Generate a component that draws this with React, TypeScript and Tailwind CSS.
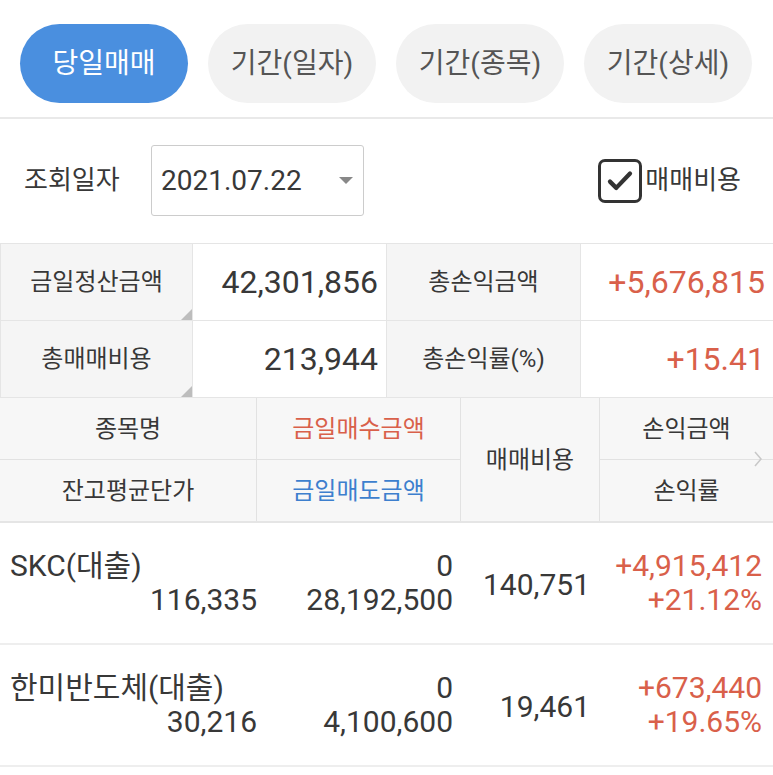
import React from "react";

const font = { fontFamily: "Roboto, 'Noto Sans CJK KR', sans-serif" };

const tabs = ["당일매매", "기간(일자)", "기간(종목)", "기간(상세)"];

const rows = [
  { name: "SKC(대출)", avg: "116,335", buy: "0", sell: "28,192,500", fee: "140,751", pl: "+4,915,412", rate: "+21.12%" },
  { name: "한미반도체(대출)", avg: "30,216", buy: "0", sell: "4,100,600", fee: "19,461", pl: "+673,440", rate: "+19.65%" },
];

const Corner = () => (
  <span className="absolute right-0 bottom-0 w-0 h-0 border-l-[11px] border-l-transparent border-b-[11px] border-b-[#bdbdbd]" />
);

const App: React.FC = () => {
  return (
    <div className="w-[773px] min-h-[775px] bg-white text-[#383838]" style={font}>
      {/* tabs */}
      <div className="flex gap-5 px-5 pt-6 pb-[14px]">
        {tabs.map((t, i) => (
          <div
            key={t}
            className={
              i === 0
                ? "w-[168px] h-[79px] rounded-full flex items-center justify-center text-[28px] bg-[#4a8fdf] text-white"
                : "w-[168px] h-[79px] rounded-full flex items-center justify-center text-[28px] bg-[#f2f2f2] text-[#555]"
            }
          >
            {t}
          </div>
        ))}
      </div>
      <div className="h-[2px] bg-[#e9e9e9]" />

      {/* query row */}
      <div className="flex items-center pt-[26px] pb-[27px] pl-6 pr-8">
        <span className="text-[26px] w-[127px]">조회일자</span>
        <div className="w-[213px] h-[71px] border border-[#cccccc] rounded-[3px] flex items-center justify-between pl-[9px] pr-[10px]">
          <span className="text-[28px]">2021.07.22</span>
          <span className="w-0 h-0 border-l-[7px] border-r-[7px] border-t-[7px] border-l-transparent border-r-transparent border-t-[#888]" />
        </div>
        <div className="ml-auto flex items-center">
          <div className="w-[44px] h-[44px] border-[3px] border-[#333] rounded-[7px] flex items-center justify-center">
            <svg width="30" height="30" viewBox="0 0 24 24" fill="none" stroke="#333" strokeWidth="3.4" strokeLinecap="round" strokeLinejoin="round">
              <path d="M4 12.5l5 5L20 6" />
            </svg>
          </div>
          <span className="text-[26px] ml-[3px]">매매비용</span>
        </div>
      </div>

      {/* summary */}
      <div className="grid grid-cols-[193px_194px_194px_192px] border-t border-[#e5e5e5]">
        <div className="relative h-[77px] bg-[#f5f5f5] border-r border-b border-l border-[#e5e5e5] flex items-center justify-center text-[24px]">
          금일정산금액
          <Corner />
        </div>
        <div className="h-[77px] border-r border-b border-[#e5e5e5] flex items-center justify-end pr-2 text-[32px]">42,301,856</div>
        <div className="h-[77px] bg-[#f5f5f5] border-r border-b border-[#e5e5e5] flex items-center justify-center text-[24px]">총손익금액</div>
        <div className="h-[77px] border-b border-[#e5e5e5] flex items-center justify-end pr-2 text-[32px] text-[#d9604a]">+5,676,815</div>
        <div className="relative h-[77px] bg-[#f5f5f5] border-r border-b border-l border-[#e5e5e5] flex items-center justify-center text-[24px]">
          총매매비용
          <Corner />
        </div>
        <div className="h-[77px] border-r border-b border-[#e5e5e5] flex items-center justify-end pr-2 text-[32px]">213,944</div>
        <div className="h-[77px] bg-[#f5f5f5] border-r border-b border-[#e5e5e5] flex items-center justify-center text-[24px]">총손익률(%)</div>
        <div className="h-[77px] border-b border-[#e5e5e5] flex items-center justify-end pr-2 text-[32px] text-[#d9604a]">+15.41</div>
      </div>

      {/* header */}
      <div className="relative grid grid-cols-[257px_204px_139px_173px] grid-rows-[62px_61px] bg-[#f7f7f7] border-b-2 border-[#e5e5e5] text-[24px]">
        <div className="border-r border-b border-[#e2e2e2] flex items-center justify-center">종목명</div>
        <div className="border-r border-b border-[#e2e2e2] flex items-center justify-center text-[#d9604a]">금일매수금액</div>
        <div className="row-span-2 border-r border-[#e2e2e2] flex items-center justify-center">매매비용</div>
        <div className="border-b border-[#e2e2e2] flex items-center justify-center">손익금액</div>
        <div className="border-r border-[#e2e2e2] flex items-center justify-center">잔고평균단가</div>
        <div className="border-r border-[#e2e2e2] flex items-center justify-center text-[#3d7fce]">금일매도금액</div>
        <div className="flex items-center justify-center">손익률</div>
        <svg className="absolute right-[10px] top-[51px]" width="10" height="20" viewBox="0 0 10 20" fill="none" stroke="#c8c8c8" strokeWidth="1.5">
          <path d="M2 3l6 7-6 7" />
        </svg>
      </div>

      {/* data rows */}
      {rows.map((r) => (
        <div key={r.name} className="grid grid-cols-[257px_204px_139px_173px] h-[122px] border-b-2 border-[#eeeeee] items-center text-[30px] leading-[34px]">
          <div className="flex flex-col pl-[10px]">
            <span className="text-left">{r.name}</span>
            <span className="text-right">{r.avg}</span>
          </div>
          <div className="flex flex-col items-end pr-2">
            <span>{r.buy}</span>
            <span>{r.sell}</span>
          </div>
          <div className="text-right pr-[10px] pt-[4px]">{r.fee}</div>
          <div className="flex flex-col items-end pr-[11px] text-[#d9604a]">
            <span>{r.pl}</span>
            <span>{r.rate}</span>
          </div>
        </div>
      ))}
    </div>
  );
};

export default App;
